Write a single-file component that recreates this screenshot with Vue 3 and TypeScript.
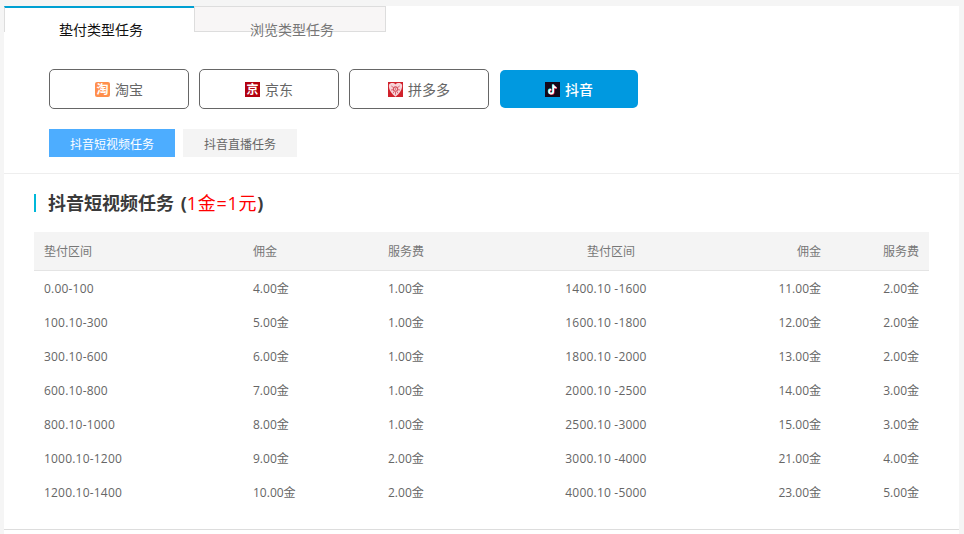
<script setup lang="ts">
const platforms = [
  { name: '淘宝', key: 'tb', glyph: '淘' },
  { name: '京东', key: 'jd', glyph: '京' },
  { name: '拼多多', key: 'pdd', glyph: '' },
  { name: '抖音', key: 'dy', glyph: '' },
]
const rows: string[][] = [
  ['0.00-100', '4.00金', '1.00金', '1400.10 -1600', '11.00金', '2.00金'],
  ['100.10-300', '5.00金', '1.00金', '1600.10 -1800', '12.00金', '2.00金'],
  ['300.10-600', '6.00金', '1.00金', '1800.10 -2000', '13.00金', '2.00金'],
  ['600.10-800', '7.00金', '1.00金', '2000.10 -2500', '14.00金', '3.00金'],
  ['800.10-1000', '8.00金', '1.00金', '2500.10 -3000', '15.00金', '3.00金'],
  ['1000.10-1200', '9.00金', '2.00金', '3000.10 -4000', '21.00金', '4.00金'],
  ['1200.10-1400', '10.00金', '2.00金', '4000.10 -5000', '23.00金', '5.00金'],
]
const head = ['垫付区间', '佣金', '服务费', '垫付区间', '佣金', '服务费']
</script>

<template>
  <div class="page">
    <div class="panel">
      <div class="content">
        <div class="tabs">
          <div class="tab active">垫付类型任务</div>
          <div class="tab idle">浏览类型任务</div>
        </div>

        <div class="platforms">
          <button v-for="p in platforms" :key="p.key" class="platform" :class="{ on: p.key === 'dy' }">
            <span v-if="p.glyph" class="badge" :class="p.key">{{ p.glyph }}</span>
            <svg v-else-if="p.key === 'pdd'" class="icon" viewBox="0 0 16 16">
              <rect width="16" height="16" fill="#d0212b" />
              <path d="M8 2.600C6.400 .6 2 .6 1 3c-.6 4.600 2.600 9.800 7 12.600 4.400-2.800 7.600-8 7-12.600-1-2.400-5.400-2.400-7-.4Z" fill="#f7d3d8" />
              <circle cx="8" cy="7.500" r="2.300" fill="none" stroke="#d4505c" stroke-width="1.100" />
              <circle cx="8" cy="7.500" r=".8" fill="#d4505c" />
              <path d="M3.500 4.200l2 1.500M12.500 4.200l-2 1.500M3.200 8.500l2.200-.3M12.800 8.500l-2.200-.3M5.500 12l1-2M10.500 12l-1-2M8 10.500v3" stroke="#d4505c" stroke-width=".9" fill="none" />
            </svg>
            <svg v-else class="icon" viewBox="0 0 16 16">
              <rect width="16" height="16" fill="#16081a" />
              <g fill="none" stroke-width="1.700">
                <path d="M8.800 2.800v7.400a2.200 2.200 0 1 1-2.200-2.200M8.800 2.800c.2 2 1.500 3.200 3.400 3.300" stroke="#25f4ee" transform="translate(-.6 -.4)" />
                <path d="M8.800 2.800v7.400a2.200 2.200 0 1 1-2.200-2.200M8.800 2.800c.2 2 1.500 3.200 3.400 3.300" stroke="#fe2c55" transform="translate(.6 .4)" />
                <path d="M8.800 2.800v7.400a2.200 2.200 0 1 1-2.200-2.200M8.800 2.800c.2 2 1.500 3.200 3.400 3.300" stroke="#fff" />
              </g>
            </svg>
            <span class="pname">{{ p.name }}</span>
          </button>
        </div>

        <div class="subtabs">
          <div class="sub current">抖音短视频任务</div>
          <div class="sub">抖音直播任务</div>
        </div>

        <div class="section">
          <h2 class="title">抖音短视频任务 (<span class="rate">1金=1元</span>)</h2>

          <div class="table">
            <div class="row header">
              <div v-for="(h, i) in head" :key="i" class="cell" :class="'c' + i">{{ h }}</div>
            </div>
            <div v-for="(r, ri) in rows" :key="ri" class="row body">
              <div v-for="(v, i) in r" :key="i" class="cell" :class="'c' + i">{{ v }}</div>
            </div>
          </div>
        </div>
      </div>
    </div>
  </div>
</template>

<style>
html, body { margin: 0; background: #f5f5f5; overflow: hidden; }
</style>

<style scoped>
.page {
  width: 964px;
  height: 534px;
  padding: 6px 5px 0 4px;
  box-sizing: border-box;
  font-family: "Open Sans", "Noto Sans CJK SC", sans-serif;
  color: #666;
}
.panel {
  background: #fff;
  height: 528px;
}
.content {
  box-sizing: border-box;
  height: 524px;
  border-bottom: 1px solid #ddd;
}
.tabs {
  display: flex;
  height: 26px;
}
.tab {
  box-sizing: border-box;
  width: 190px;
  height: 26px;
  text-align: center;
  font-size: 14px;
  line-height: 20px;
  padding-top: 14px;
}
.tab.active {
  color: #111;
  border-top: 2px solid #00a0d2;
  border-left: 1px solid #ddd;
  padding: 12px 0 0 3px;
}
.tab.idle {
  width: 192px;
  color: #777;
  background: #f8f6f6;
  border: 1px solid #ddd;
  padding: 13px 0 0 4px;
}
.platforms {
  display: flex;
  gap: 10px;
  margin: 37px 0 0 45px;
}
.platform {
  box-sizing: border-box;
  width: 140px;
  height: 40px;
  border: 1px solid #666;
  border-radius: 5px;
  background: #fff;
  color: #666;
  font: inherit;
  font-size: 14px;
  padding: 0;
  display: flex;
  align-items: center;
  justify-content: center;
  gap: 5px;
}
.platform.on {
  margin-left: 1px;
  width: 138px;
  height: 38px;
  margin-top: 1px;
  border: none;
  background: #0099e0;
  color: #fff;
  font-weight: 500;
}
.badge, .icon {
  width: 15px;
  height: 15px;
  flex: none;
  display: block;
}
.badge {
  color: #fff;
  font-size: 12px;
  line-height: 15px;
  font-weight: 700;
  text-align: center;
  overflow: hidden;
}
.badge.tb { background: #ff8f4c; border-radius: 2px; }
.badge.jd { background: #b3000e; }
.subtabs {
  display: flex;
  gap: 8px;
  margin-top: 20px;
  padding: 0 0 16px 45px;
  border-bottom: 1px solid #eee;
}
.sub {
  height: 28px;
  line-height: 31px;
  padding: 0 21px;
  font-size: 12px;
  background: #f4f4f4;
  color: #666;
}
.sub.current {
  background: #4dadff;
  color: #fff;
}
.section {
  padding: 20px 30px 0;
}
.title {
  margin: 0 0 20px;
  height: 18px;
  line-height: 18px;
  border-left: 2px solid #00b8d9;
  padding-left: 12px;
  font-size: 18px;
  font-weight: 700;
  color: #3a3a3a;
  white-space: nowrap;
  word-spacing: 2px;
}
.rate {
  color: #f00;
  font-weight: 400;
  letter-spacing: .7px;
}
.table {
  width: 895px;
  font-size: 12px;
}
.row {
  display: grid;
  grid-template-columns: 209px 135px 100px 256px 97px 98px;
  height: 34px;
  align-items: center;
}
.row.header {
  box-sizing: border-box;
  height: 39px;
  background: #f4f4f4;
  border-bottom: 1px solid #e4e4e4;
  color: #777;
}
.body .c0, .body .c3 { letter-spacing: .2px; }
.cell { padding: 0 10px; white-space: nowrap; }
.c3 { text-align: center; }
.header .c3 { padding-left: 20px; }
.c4, .c5 { text-align: right; }
</style>
